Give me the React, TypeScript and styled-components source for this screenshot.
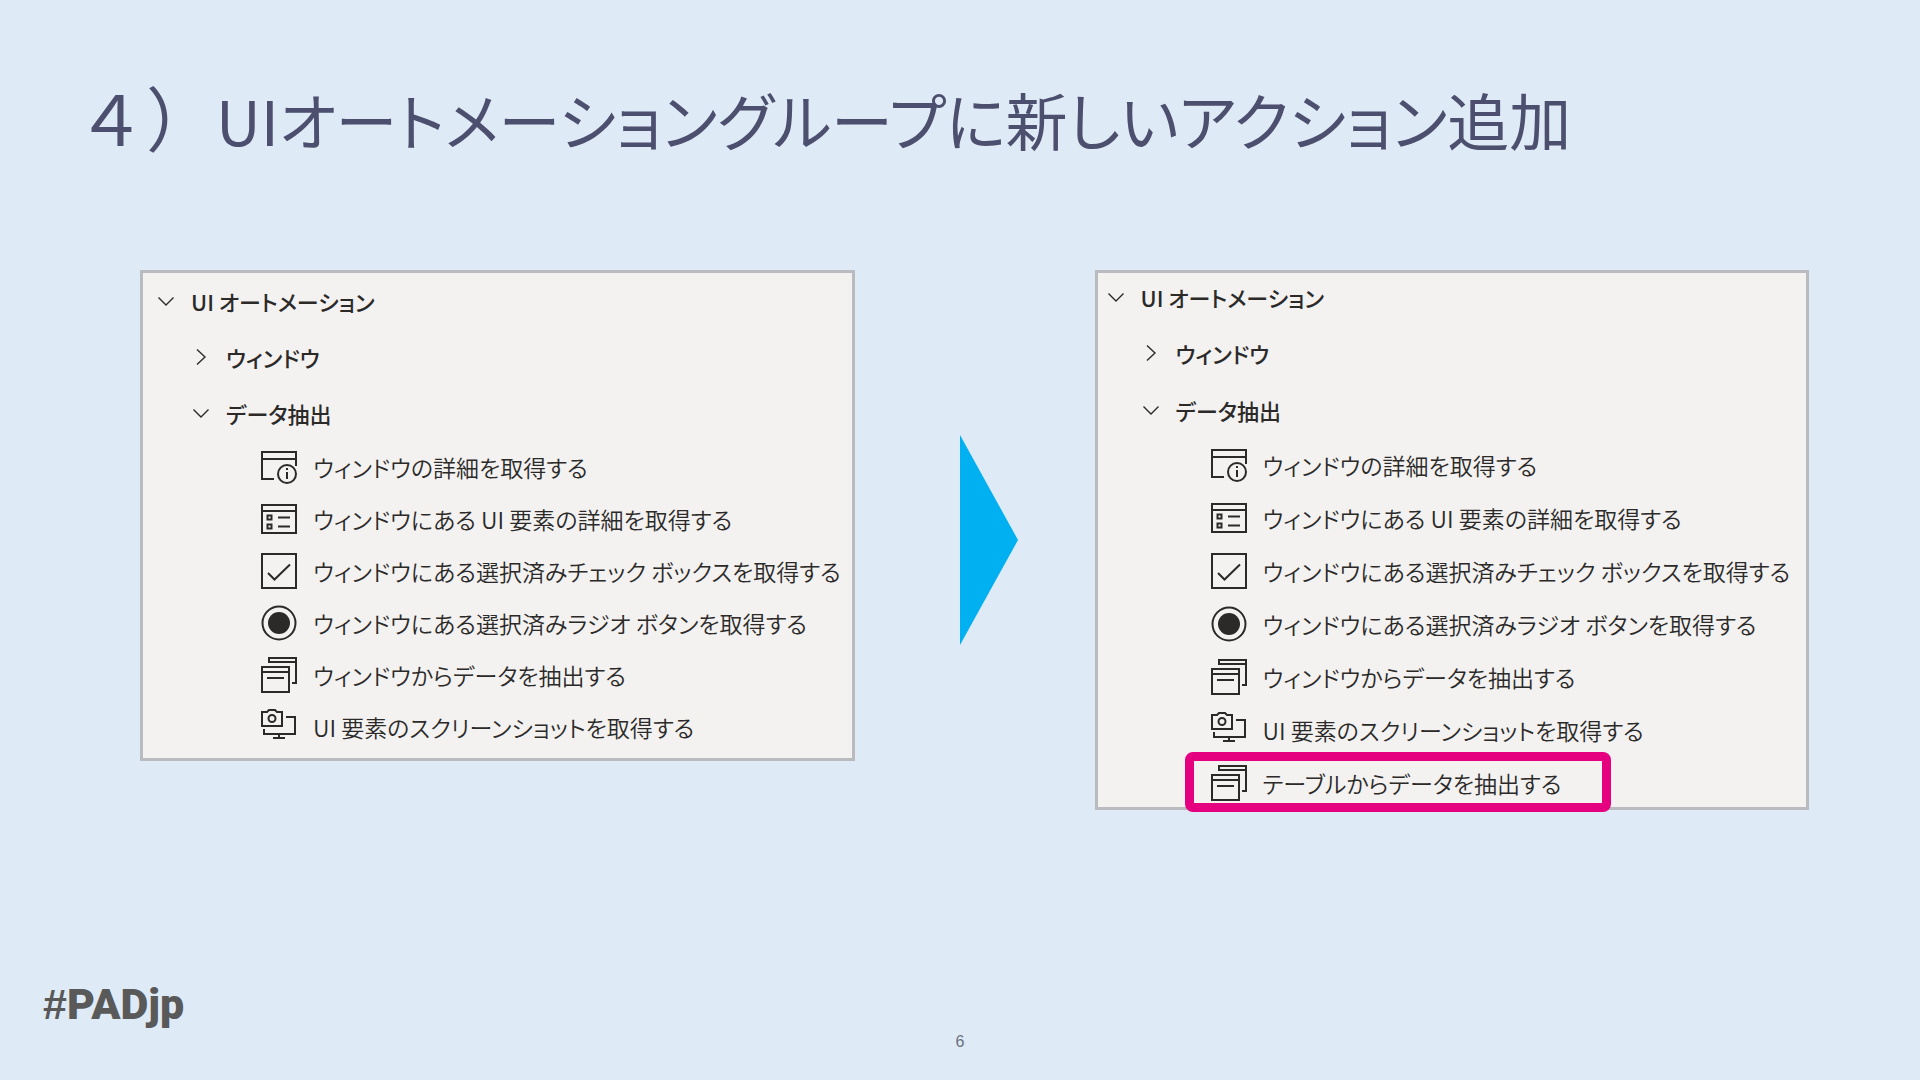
import React from "react";
import styled, { createGlobalStyle } from "styled-components";

const GlobalStyle = createGlobalStyle`
  *, *::before, *::after { box-sizing: border-box; }
  body {
    margin: 0;
    background: #deeaf6;
    font-family: "Noto Sans CJK JP", sans-serif;
    font-feature-settings: "palt";
  }
  ul { list-style: none; margin: 0; padding: 0; }
`;

const Slide = styled.main`
  min-height: 100vh;
  display: flex;
  flex-direction: column;
  background: #deeaf6;
`;

const Title = styled.h1`
  margin: 0;
  padding: 68px 76px 0;
  height: 270px;
  font-size: 62px;
  line-height: 96px;
  font-weight: 400;
  color: #4d4f6e;
  white-space: nowrap;
`;

const TitleNumber = styled.span`
  font-size: 70px;
  font-feature-settings: normal;
`;

const Comparison = styled.section`
  display: grid;
  grid-template-columns: minmax(0, 1fr) 240px minmax(0, 1fr);
  align-items: start;
  padding: 0 111px 0 140px;
`;

const Panel = styled.div<{ $bottom: number; $left: number }>`
  border: 3px solid #b9bbbf;
  background: #f3f2f1;
  color: #2b2a29;
  padding: 0 0 ${(p) => p.$bottom}px ${(p) => p.$left}px;
`;

const GroupButton = styled.button<{ $height: number }>`
  display: flex;
  align-items: center;
  gap: 16px;
  height: ${(p) => p.$height}px;
  padding: 0;
  border: 0;
  background: none;
  color: inherit;
  font: 500 22px/32px "Noto Sans CJK JP", sans-serif;
  font-feature-settings: inherit;
  white-space: nowrap;
`;

const Branch = styled.ul<{ $gap: number }>`
  padding: ${(p) => p.$gap}px 0 0 35px;
`;

const Actions = styled.ul`
  margin-bottom: -3px;
  padding-left: 69px;
`;

const Action = styled.li<{ $height: number }>`
  position: relative;
  display: flex;
  align-items: center;
  gap: 16px;
  height: ${(p) => p.$height}px;
  font-size: 23px;
  line-height: 32px;
  font-weight: 350;
  white-space: nowrap;
`;

const Highlight = styled.span`
  position: absolute;
  left: -26px;
  top: -4px;
  width: 426px;
  height: 60px;
  border: 9px solid #e4007f;
  border-radius: 8px;
`;

const Icon = styled.svg`
  flex: none;
  width: 36px;
  height: 36px;
  fill: none;
  stroke: currentColor;
  stroke-width: 2;
`;

const ChevronIcon = styled.svg`
  flex: none;
  width: 18px;
  height: 18px;
  fill: none;
  stroke: currentColor;
  stroke-width: 1.4;
`;

const ArrowCell = styled.div`
  align-self: center;
  display: flex;
  justify-content: center;
  padding-left: 28px;
`;

const Arrow = styled.svg`
  width: 58px;
  height: 210px;
  fill: #00b0f0;
`;

const Footer = styled.footer`
  margin-top: auto;
  display: grid;
  grid-template-columns: 1fr auto 1fr;
  align-items: end;
  padding: 0 43px 26px;
`;

const HashTag = styled.span`
  padding-bottom: 20px;
  font-family: Roboto, "Liberation Sans", sans-serif;
  font-size: 43px;
  line-height: 60px;
  font-weight: 900;
  color: #595959;
`;

const HashMark = styled.span`
  font-family: "Liberation Sans", sans-serif;
  font-weight: 700;
`;

const PageNumber = styled.span`
  font: 16px/24px "Liberation Sans", sans-serif;
  color: #6b7280;
`;

type IconName = "info" | "form" | "check" | "radio" | "windows" | "camera";

const drawings: Record<IconName, React.ReactNode> = {
  info: (
    <>
      <path d="M13 30H1V3H35V17M1 10H35" />
      <circle cx="26" cy="25" r="9" />
      <path d="M26 23V30M26 19V21" />
    </>
  ),
  form: (
    <>
      <path d="M1 4H35V32H1ZM1 10H35M17 16.500H29M17 25.500H29" />
      <path d="M6.500 14.500H10.500V18.500H6.500ZM6.500 23.500H10.500V27.500H6.500Z" />
    </>
  ),
  check: (
    <>
      <path d="M1 1H35V35H1Z" />
      <path d="M7 20L13.500 26.500L29 11.500" />
    </>
  ),
  radio: (
    <>
      <circle cx="18" cy="18" r="16.500" />
      <circle cx="18" cy="18" r="11" fill="currentColor" stroke="none" />
    </>
  ),
  windows: (
    <>
      <path d="M8 6V1H35V26H31M8 5H35" />
      <path d="M1 10H28V35H1ZM1 15H28M6 21H23" />
    </>
  ),
  camera: (
    <>
      <path d="M1 3H6L8 1H14L16 3H21V17H1Z" />
      <circle cx="11" cy="9.500" r="3.500" />
      <path d="M25 8H34V25H3V20M18 25V29M12 29H24" />
    </>
  ),
};

interface ActionItem {
  icon: IconName;
  label: string;
  highlighted?: boolean;
}

const baseActions: ActionItem[] = [
  { icon: "info", label: "ウィンドウの詳細を取得する" },
  { icon: "form", label: "ウィンドウにある UI 要素の詳細を取得する" },
  { icon: "check", label: "ウィンドウにある選択済みチェック ボックスを取得する" },
  { icon: "radio", label: "ウィンドウにある選択済みラジオ ボタンを取得する" },
  { icon: "windows", label: "ウィンドウからデータを抽出する" },
  { icon: "camera", label: "UI 要素のスクリーンショットを取得する" },
];

const newActions: ActionItem[] = [
  ...baseActions,
  { icon: "windows", label: "テーブルからデータを抽出する", highlighted: true },
];

function Chevron({ open }: { open: boolean }) {
  return (
    <ChevronIcon viewBox="0 0 18 18" aria-hidden="true">
      <path d={open ? "M1.500 5.500L9 13L16.500 5.500" : "M5 1.500L13 9L5 16.500"} />
    </ChevronIcon>
  );
}

interface TreeProps {
  actions: ActionItem[];
  left: number;
  bottom: number;
  rootHeight: number;
  rootGap: number;
  groupHeight: number;
  rowHeight: number;
}

function ActionTree({ actions, left, bottom, rootHeight, rootGap, groupHeight, rowHeight }: TreeProps) {
  return (
    <Panel $bottom={bottom} $left={left}>
      <GroupButton type="button" aria-expanded="true" $height={rootHeight}>
        <Chevron open />
        UI オートメーション
      </GroupButton>
      <Branch $gap={rootGap}>
        <li>
          <GroupButton type="button" aria-expanded="false" $height={groupHeight}>
            <Chevron open={false} />
            ウィンドウ
          </GroupButton>
        </li>
        <li>
          <GroupButton type="button" aria-expanded="true" $height={groupHeight}>
            <Chevron open />
            データ抽出
          </GroupButton>
          <Actions>
            {actions.map((a) => (
              <Action key={a.label} $height={rowHeight}>
                <Icon viewBox="0 0 36 36" aria-hidden="true">
                  {drawings[a.icon]}
                </Icon>
                {a.label}
                {a.highlighted && <Highlight />}
              </Action>
            ))}
          </Actions>
        </li>
      </Branch>
    </Panel>
  );
}

export default function App() {
  return (
    <Slide>
      <GlobalStyle />
      <Title>
        <TitleNumber>４）</TitleNumber>UIオートメーショングループに新しいアクション追加
      </Title>
      <Comparison>
        <ActionTree
          actions={baseActions}
          left={14}
          bottom={8}
          rootHeight={56}
          rootGap={0}
          groupHeight={56}
          rowHeight={52}
        />
        <ArrowCell>
          <Arrow viewBox="0 0 58 210" aria-hidden="true">
            <path d="M0 0L58 105L0 210Z" />
          </Arrow>
        </ArrowCell>
        <ActionTree
          actions={newActions}
          left={9}
          bottom={1}
          rootHeight={48}
          rootGap={3}
          groupHeight={57}
          rowHeight={53}
        />
      </Comparison>
      <Footer>
        <HashTag>
          <HashMark>#</HashMark>PADjp
        </HashTag>
        <PageNumber>6</PageNumber>
      </Footer>
    </Slide>
  );
}
